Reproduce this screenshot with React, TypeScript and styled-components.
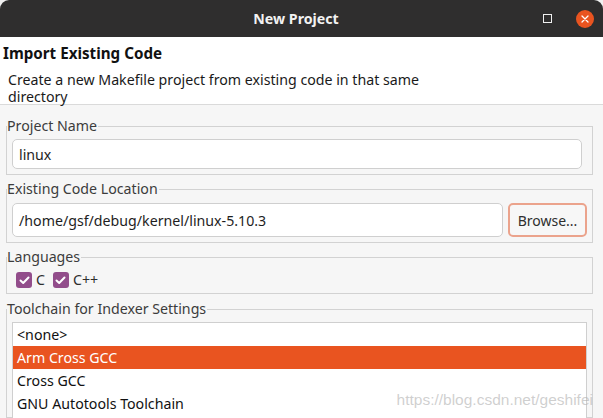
import React from "react";
import styled, { createGlobalStyle } from "styled-components";

const GlobalStyle = createGlobalStyle`
  html, body { margin: 0; padding: 0; background: #f0f0f0; }
  body { font-family: "Noto Sans", "Open Sans", sans-serif; }
  * { box-sizing: border-box; }
`;

const Window = styled.div`
  width: 603px;
  height: 418px;
  overflow: hidden;
  display: flex;
  flex-direction: column;
  background: #f6f6f6;
  border-radius: 9px 9px 0 0;
  position: relative;
`;

const TitleBar = styled.div`
  height: 37px;
  flex: none;
  background: #2f2e2e;
  display: grid;
  grid-template-columns: 1fr auto 1fr;
  align-items: center;
  padding-right: 9px;
`;

const Title = styled.div`
  grid-column: 2;
  color: #f2f2f2;
  font-weight: 700;
  font-size: 14.2px;
  margin-left: -2px;
`;

const Controls = styled.div`
  grid-column: 3;
  justify-self: end;
  display: flex;
  align-items: center;
  gap: 24px;
`;

const MaxButton = styled.div`
  width: 9px;
  height: 9px;
  border: 1px solid #f0f0f0;
`;

const CloseButton = styled.div`
  width: 18px;
  height: 18px;
  border-radius: 50%;
  background: #e95420;
  display: flex;
  align-items: center;
  justify-content: center;
`;

const Header = styled.div`
  flex: none;
  background: #ffffff;
  padding: 7px 4px 0 4px;
  border-bottom: 1px solid #dadada;
  height: 68px;
`;

const HeaderTitle = styled.div`
  font-weight: 700;
  font-size: 15.2px;
  line-height: 19px;
  color: #111;
  margin-left: -1px;
`;

const HeaderDesc = styled.div`
  margin: 8px 0 0 4px;
  max-width: 440px;
  font-size: 14.2px;
  line-height: 17px;
  color: #1a1a1a;
`;

const Body = styled.div`
  flex: 1;
  min-height: 0;
  padding: 12px 10px 0 6px;
  display: flex;
  flex-direction: column;
  gap: 5px;
`;

const Group = styled.fieldset<{ $grow?: boolean; $mt?: number }>`
  margin: ${(p) => p.$mt ?? 0}px 0 0 0;
  padding: 0;
  min-width: 0;
  border: 1px solid #d2d2d2;
  ${(p) => (p.$grow ? "flex: 1; min-height: 0;" : "")}
`;

const Legend = styled.legend`
  padding: 0 1px 0 0;
  font-size: 14.2px;
  line-height: 18px;
  color: #3c3c3c;
`;

const GroupBody = styled.div<{ $pad: string }>`
  padding: ${(p) => p.$pad};
`;

const TextInput = styled.div<{ $h: number }>`
  height: ${(p) => p.$h}px;
  flex: 1;
  background: #ffffff;
  border: 1px solid #cfcfcf;
  border-radius: 5px;
  display: flex;
  align-items: center;
  padding-left: 6px;
  font-size: 14.2px;
  color: #1e1e1e;
`;

const Row = styled.div`
  display: flex;
  gap: 5px;
`;

const BrowseButton = styled.div`
  width: 79px;
  height: 34px;
  border: 2px solid #eba38c;
  border-radius: 5px;
  background: #f7f7f7;
  display: flex;
  align-items: center;
  justify-content: center;
  font-size: 14px;
  color: #2e2e2e;
`;

const CheckRow = styled.div`
  display: flex;
  align-items: center;
  gap: 8px;
`;

const CheckItem = styled.div`
  display: flex;
  align-items: center;
  gap: 4px;
  font-size: 14.2px;
  line-height: 16px;
  color: #2e2e2e;
`;

const CheckBox = styled.div`
  width: 16px;
  height: 16px;
  border-radius: 3px;
  background: #924d8b;
  display: flex;
  align-items: center;
  justify-content: center;
`;

const List = styled.div`
  background: #ffffff;
  border: 1px solid #cfcfcf;
  border-bottom: none;
  height: 120px;
`;

const ListRow = styled.div<{ $selected?: boolean }>`
  height: 23px;
  display: flex;
  align-items: center;
  padding-left: 4px;
  font-size: 14.2px;
  color: ${(p) => (p.$selected ? "#ffffff" : "#111")};
  background: ${(p) => (p.$selected ? "#e95420" : "transparent")};
`;

const Watermark = styled.div`
  position: absolute;
  right: 10px;
  top: 391px;
  line-height: 18px;
  font-family: "Liberation Sans", Arial, sans-serif;
  font-size: 15.5px;
  color: rgba(175, 175, 175, 0.6);
  pointer-events: none;
  white-space: nowrap;
`;

const Check = () => (
  <svg width="11" height="9" viewBox="0 0 11 9">
    <polyline points="1.5,4.5 4.2,7 9.5,1.5" fill="none" stroke="#fff" strokeWidth="2" strokeLinecap="round" strokeLinejoin="round" />
  </svg>
);

const CloseX = () => (
  <svg width="8" height="8" viewBox="0 0 8 8">
    <path d="M1 1 L7 7 M7 1 L1 7" stroke="#fff" strokeWidth="1.3" strokeLinecap="round" />
  </svg>
);

const toolchains = ["<none>", "Arm Cross GCC", "Cross GCC", "GNU Autotools Toolchain"];

export default function App() {
  return (
    <>
      <GlobalStyle />
      <Window>
        <TitleBar>
          <Title>New Project</Title>
          <Controls>
            <MaxButton />
            <CloseButton>
              <CloseX />
            </CloseButton>
          </Controls>
        </TitleBar>
        <Header>
          <HeaderTitle>Import Existing Code</HeaderTitle>
          <HeaderDesc>Create a new Makefile project from existing code in that same directory</HeaderDesc>
        </Header>
        <Body>
          <Group>
            <Legend>Project Name</Legend>
            <GroupBody $pad="4px 10px 5px 5px">
              <TextInput $h={30}>linux</TextInput>
            </GroupBody>
          </Group>
          <Group>
            <Legend>Existing Code Location</Legend>
            <GroupBody $pad="5px 5px 5px 5px">
              <Row>
                <TextInput $h={34}>/home/gsf/debug/kernel/linux-5.10.3</TextInput>
                <BrowseButton>Browse...</BrowseButton>
              </Row>
            </GroupBody>
          </Group>
          <Group>
            <Legend>Languages</Legend>
            <GroupBody $pad="6px 0 5px 9px">
              <CheckRow>
                <CheckItem>
                  <CheckBox><Check /></CheckBox>C
                </CheckItem>
                <CheckItem>
                  <CheckBox><Check /></CheckBox>C++
                </CheckItem>
              </CheckRow>
            </GroupBody>
          </Group>
          <Group $grow $mt={1}>
            <Legend>Toolchain for Indexer Settings</Legend>
            <GroupBody $pad="4px 5px 0 5px">
              <List>
                {toolchains.map((t) => (
                  <ListRow key={t} $selected={t === "Arm Cross GCC"}>{t}</ListRow>
                ))}
              </List>
            </GroupBody>
          </Group>
        </Body>
        <Watermark>https://blog.csdn.net/geshifei</Watermark>
      </Window>
    </>
  );
}
